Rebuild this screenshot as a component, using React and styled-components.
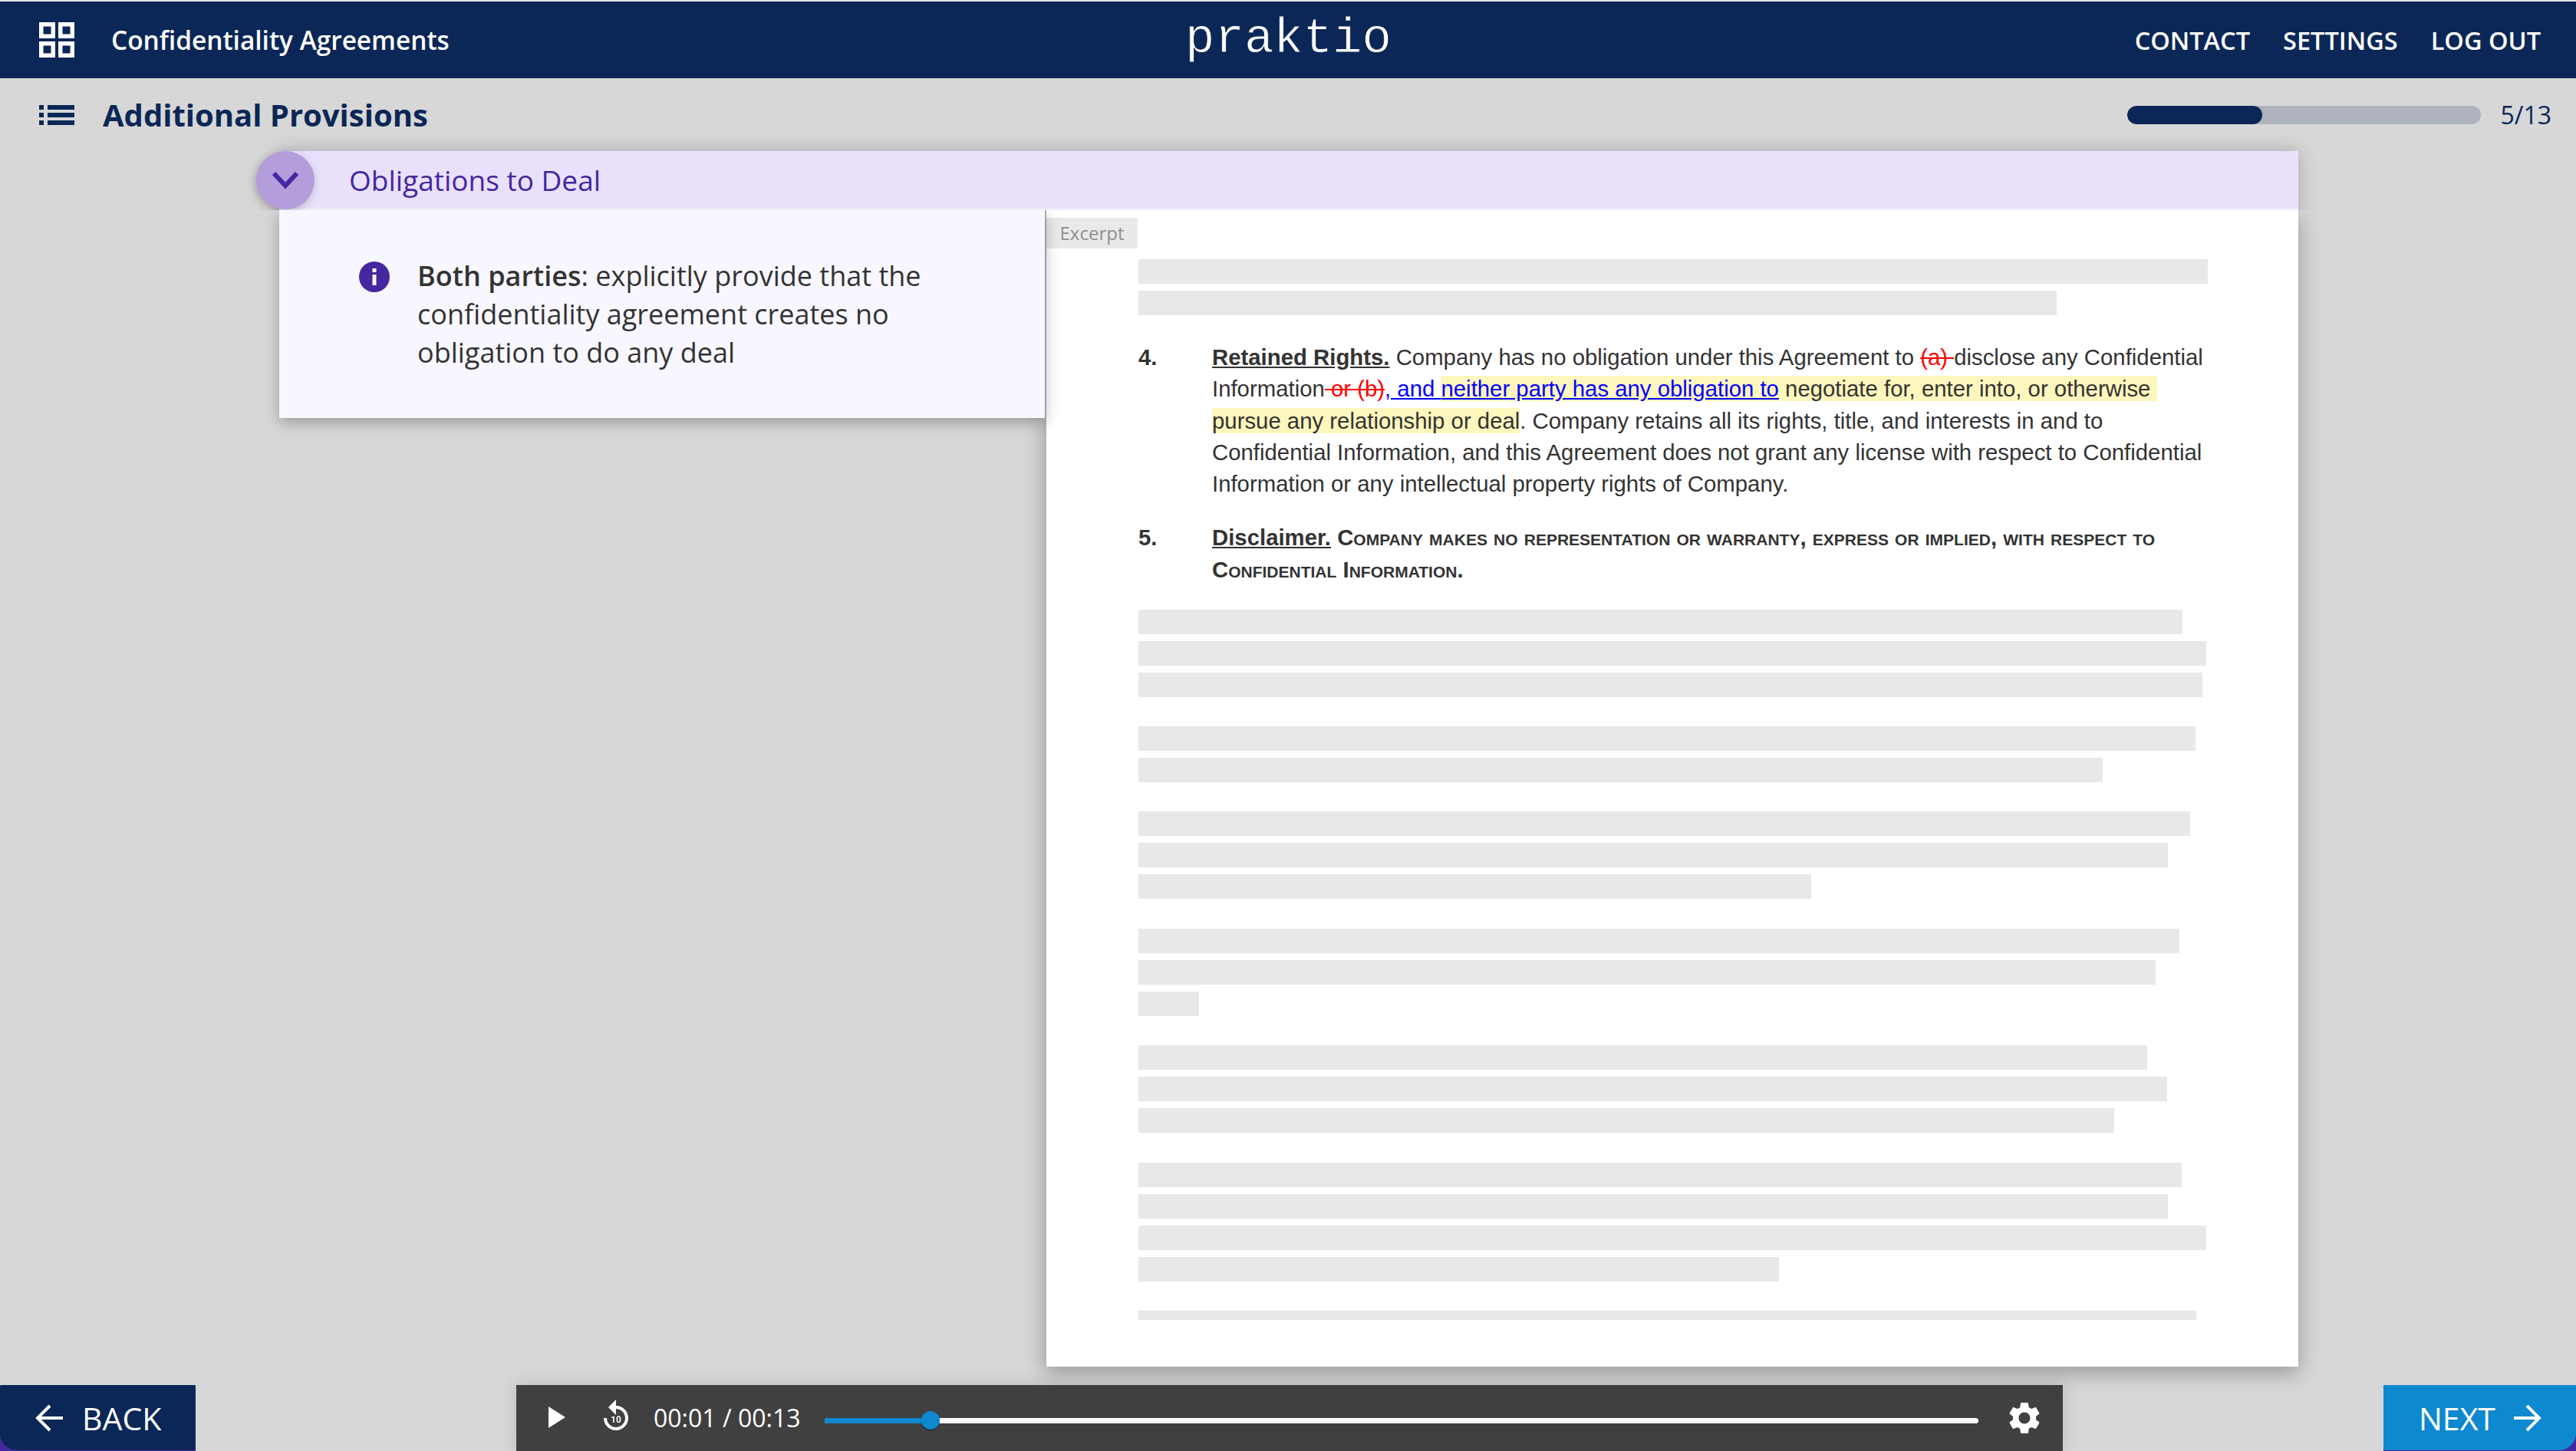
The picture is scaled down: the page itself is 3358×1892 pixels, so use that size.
import React from 'react';
import styled, { createGlobalStyle } from 'styled-components';
import { MdSettings, MdReplay10 } from 'react-icons/md';

const navy = '#0b2757';
const purple = '#4527a0';
const blue = '#0e88cf';
const sans = '"Open Sans", "Noto Sans", sans-serif';

const GlobalStyle = createGlobalStyle`
  html, body {
    margin: 0;
    padding: 0;
    background: #d7d7d7;
  }
  * { box-sizing: border-box; }
`;

const Page = styled.div`
  width: 3358px;
  height: 1892px;
  display: flex;
  flex-direction: column;
  overflow: hidden;
  background: #d7d7d7;
  border-top: 2px solid #e6e6e6;
  font-family: ${sans};
`;

const TopBar = styled.header`
  height: 100px;
  flex: none;
  display: grid;
  grid-template-columns: 1fr auto 1fr;
  align-items: center;
  padding: 0 46px 0 51px;
  background: ${navy};
  color: #fff;
`;

const CourseLink = styled.div`
  display: flex;
  align-items: center;
  gap: 48px;
  font-size: 33.4px;
  font-weight: 600;
`;

const Logo = styled.div`
  font-family: "Liberation Mono", monospace;
  font-size: 64px;
  line-height: 1;
  margin: -2px 0 0 -4px;
  -webkit-text-stroke: 0.8px ${navy};
`;

const Nav = styled.nav`
  display: flex;
  justify-content: flex-end;
  gap: 43px;
  font-size: 32.5px;
  font-weight: 600;
`;

const SubBar = styled.div`
  height: 95px;
  flex: none;
  display: flex;
  align-items: center;
  padding: 0 32px 0 51px;
  color: ${navy};
`;

const SectionTitle = styled.h1`
  flex: 1;
  margin: 0 0 0 37px;
  font-size: 40px;
  font-weight: 700;
`;

const Progress = styled.div`
  width: 461px;
  height: 24px;
  border-radius: 12px;
  overflow: hidden;
  background: #aeb2bd;
`;

const ProgressFill = styled.div`
  height: 100%;
  border-radius: 12px;
  background: ${navy};
`;

const ProgressLabel = styled.span`
  margin-left: 25px;
  font-size: 32px;
`;

const Main = styled.main`
  flex: 1;
  min-height: 0;
  display: flex;
  flex-direction: column;
  padding: 0 362px 24px 364px;
`;

const Band = styled.div`
  position: relative;
  z-index: 2;
  height: 77px;
  flex: none;
  display: flex;
  align-items: center;
  padding: 0 0 0 91px;
  background: #e9e1fc;
  border-bottom: 2px solid #f2effa;
  box-shadow: 0 0 24px rgba(0, 0, 0, 0.22);
  clip-path: inset(-40px -40px 0 -40px);
  color: ${purple};
  font-size: 37px;
  font-weight: 500;
`;

const Toggle = styled.div`
  position: absolute;
  left: -30px;
  top: 0;
  width: 76px;
  height: 76px;
  display: flex;
  align-items: center;
  justify-content: center;
  border-radius: 50%;
  background: #b39ddb;
  box-shadow: -2px 3px 12px rgba(0, 0, 0, 0.25);
`;

const Body = styled.div`
  flex: 1;
  min-height: 0;
  display: flex;
  align-items: stretch;
`;

const NotePanel = styled.section`
  position: relative;
  z-index: 1;
  width: 998px;
  height: 271px;
  flex: none;
  display: flex;
  gap: 36px;
  padding: 61px 0 0 104px;
  background: #f8f7ff;
  box-shadow: 0 6px 18px rgba(0, 0, 0, 0.28);
  color: #333;
  font-size: 36px;
  line-height: 50px;
`;

const NoteIcon = styled.svg`
  flex: none;
  margin-top: 6px;
`;

const NoteLead = styled.strong`
  font-weight: 600;
`;

const Doc = styled.article`
  position: relative;
  flex: 1;
  padding: 64px 0 0 120px;
  background: #fff;
  border-left: 2px solid #b5b5b5;
  box-shadow: 0 8px 26px rgba(0, 0, 0, 0.3);
  color: #333;
  font-family: "Liberation Sans", Arial, sans-serif;
  font-size: 29.35px;
  line-height: 41.3px;
`;

const ExcerptTag = styled.div`
  position: absolute;
  left: 0;
  top: 10px;
  width: 119px;
  height: 40px;
  display: flex;
  align-items: center;
  justify-content: center;
  background: #e9e9e9;
  color: #8f8f8f;
  font-family: ${sans};
  font-size: 24px;
`;

const BarGroup = styled.div`
  display: flex;
  flex-direction: column;
  gap: 9px;
  margin-top: ${({ $top }) => $top || 0}px;
`;

const Bar = styled.div`
  width: ${({ $w }) => $w}px;
  height: ${({ $h }) => $h || 32}px;
  background: #e8e8e8;
`;

const Clause = styled.div`
  display: grid;
  grid-template-columns: 96px 1fr;
  margin-top: ${({ $top }) => $top}px;
  white-space: pre;
`;

const ClauseNumber = styled.b`
  font-weight: 700;
`;

const ClauseTitle = styled.b`
  font-weight: 700;
  text-decoration: underline;
`;

const Deleted = styled.span`
  color: #f00;
  text-decoration: line-through;
`;

const Inserted = styled.span`
  color: #00f;
  text-decoration: underline;
`;

const Mark = styled.span`
  background: #fdf6bd;
`;

const SmallCaps = styled.span`
  font-variant: small-caps;
  font-weight: 700;
`;

const Footer = styled.footer`
  height: 86px;
  flex: none;
  display: flex;
  justify-content: space-between;
`;

const NavCorner = styled.div`
  padding-bottom: 1px;
  background: ${purple};
  border-radius: 2px 2px 0 0;
`;

const NavButton = styled.button`
  height: 100%;
  width: ${({ $w }) => $w}px;
  display: flex;
  align-items: center;
  gap: ${({ $next }) => ($next ? 24 : 25)}px;
  padding: 0 0 0 46px;
  border: 0;
  border-radius: ${({ $next }) => ($next ? '2px 2px 22px 2px' : '2px 2px 2px 22px')};
  background: ${({ $next }) => ($next ? blue : navy)};
  color: #fff;
  font-family: ${sans};
  font-size: 41px;
`;

const ArrowIcon = styled.svg`
  transform: ${({ $flip }) => ($flip ? 'scaleX(-1)' : 'none')};
`;

const Player = styled.div`
  width: 2016px;
  display: flex;
  align-items: center;
  padding: 0 30px 0 42px;
  background: #404040;
  box-shadow: 0 0 20px rgba(0, 0, 0, 0.14);
  color: #fff;
`;

const PlayIcon = styled.svg`
  flex: none;
  margin-right: 42px;
  margin-top: -2px;
`;

const ReplayButton = styled.div`
  flex: none;
  display: flex;
  margin-right: 25px;
  margin-top: -4px;
`;

const Time = styled.span`
  flex: none;
  margin: -2px 31px 0 0;
  font-size: 32px;
  font-weight: 400;
`;

const Slider = styled.div`
  position: relative;
  flex: 1;
  height: 7px;
  margin: 6px 35px 0 0;
  border-radius: 4px;
  background: #fff;
`;

const SliderFill = styled.div`
  height: 100%;
  border-radius: 4px;
  background: ${blue};
`;

const SliderThumb = styled.div`
  position: absolute;
  top: -9px;
  width: 24px;
  height: 24px;
  margin-left: -12px;
  border-radius: 50%;
  background: ${blue};
  box-shadow: 0 1px 1px rgba(0, 0, 0, 0.6);
`;

const GearButton = styled.div`
  flex: none;
  display: flex;
  margin: 0 -5px 0 0;
`;

const GridIcon = () => (
  <svg width="46" height="46" viewBox="0 0 46 46" fill="none" stroke="#fff" strokeWidth="5.5">
    <rect x="2.75" y="2.75" width="15.5" height="15.5" />
    <rect x="27.75" y="2.75" width="15.5" height="15.5" />
    <rect x="2.75" y="27.75" width="15.5" height="15.5" />
    <rect x="27.75" y="27.75" width="15.5" height="15.5" />
  </svg>
);

const ListIcon = () => (
  <svg width="46" height="26" viewBox="0 0 46 26" fill={navy}>
    <rect x="0" y="0" width="6" height="6" />
    <rect x="11" y="0" width="35" height="6" />
    <rect x="0" y="10" width="6" height="6" />
    <rect x="11" y="10" width="35" height="6" />
    <rect x="0" y="20" width="6" height="6" />
    <rect x="11" y="20" width="35" height="6" />
  </svg>
);

const Chevron = () => (
  <svg width="36" height="24" viewBox="0 0 36 24" fill="none" stroke={purple} strokeWidth="6">
    <path d="M3 3 L18 19 L33 3" />
  </svg>
);

const Arrow = ({ flip }) => (
  <ArrowIcon $flip={flip} width="36" height="36" viewBox="0 0 36 36" fill="none" stroke="#fff" strokeWidth="4">
    <path d="M36 18 H4 M19 2 L3 18 L19 34" />
  </ArrowIcon>
);

const topBars = [1394, 1197];
const barGroups = [
  { top: 32, widths: [1361, 1392, 1387] },
  { top: 38, widths: [1378, 1257] },
  { top: 38, widths: [1371, 1342, 877] },
  { top: 39, widths: [1357, 1326, 79] },
  { top: 38, widths: [1315, 1341, 1272] },
  { top: 39, widths: [1360, 1342, 1392, 835] },
];

const App = () => {
  const sliderPct = 9.2;

  return (
    <>
      <GlobalStyle />
      <Page>
        <TopBar>
          <CourseLink>
            <GridIcon />
            <span>Confidentiality Agreements</span>
          </CourseLink>
          <Logo>praktio</Logo>
          <Nav>
            <span>CONTACT</span>
            <span>SETTINGS</span>
            <span>LOG OUT</span>
          </Nav>
        </TopBar>

        <SubBar>
          <ListIcon />
          <SectionTitle>Additional Provisions</SectionTitle>
          <Progress>
            <ProgressFill style={{ width: `${(5 / 13) * 100 - 0.4}%` }} />
          </Progress>
          <ProgressLabel>5/13</ProgressLabel>
        </SubBar>

        <Main>
          <Band>
            <Toggle>
              <Chevron />
            </Toggle>
            Obligations to Deal
          </Band>
          <Body>
            <NotePanel>
              <NoteIcon width="40" height="40" viewBox="0 0 40 40">
                <circle cx="20" cy="20" r="20" fill={purple} />
                <rect x="17.5" y="9" width="5" height="5" fill="#fff" />
                <rect x="17.5" y="17" width="5" height="14" fill="#fff" />
              </NoteIcon>
              <div>
                <NoteLead>Both parties</NoteLead>: explicitly provide that the
                <br />
                confidentiality agreement creates no
                <br />
                obligation to do any deal
              </div>
            </NotePanel>

            <Doc>
              <ExcerptTag>Excerpt</ExcerptTag>
              <BarGroup>
                {topBars.map((w, i) => (
                  <Bar key={i} $w={w} />
                ))}
              </BarGroup>

              <Clause $top={34}>
                <ClauseNumber>4.</ClauseNumber>
                <div>
                  <ClauseTitle>Retained Rights.</ClauseTitle> Company has no obligation under this Agreement to{' '}
                  <Deleted>(a) </Deleted>disclose any Confidential
                  <br />
                  Information<Deleted> or (b)</Deleted>
                  <Inserted>, and </Inserted>
                  <Mark>
                    <Inserted>neither party has any obligation to</Inserted> negotiate for, enter into, or otherwise{' '}
                  </Mark>
                  <br />
                  <Mark>pursue any relationship or deal</Mark>. Company retains all its rights, title, and interests in and to
                  <br />
                  Confidential Information, and this Agreement does not grant any license with respect to Confidential
                  <br />
                  Information or any intellectual property rights of Company.
                </div>
              </Clause>

              <Clause $top={29}>
                <ClauseNumber>5.</ClauseNumber>
                <div>
                  <ClauseTitle>Disclaimer.</ClauseTitle>{' '}
                  <SmallCaps>Company makes no representation or warranty, express or implied, with respect to</SmallCaps>
                  <br />
                  <SmallCaps>Confidential Information.</SmallCaps>
                </div>
              </Clause>

              {barGroups.map((group, i) => (
                <BarGroup key={i} $top={group.top}>
                  {group.widths.map((w, j) => (
                    <Bar key={j} $w={w} />
                  ))}
                </BarGroup>
              ))}
              <BarGroup $top={38}>
                <Bar $w={1379} $h={12} />
              </BarGroup>
            </Doc>
          </Body>
        </Main>

        <Footer>
          <NavCorner>
            <NavButton $w={255}>
              <Arrow />
              BACK
            </NavButton>
          </NavCorner>

          <Player>
            <PlayIcon width="22" height="28" viewBox="0 0 22 28">
              <path d="M0 0 L22 14 L0 28 Z" fill="#fff" />
            </PlayIcon>
            <ReplayButton>
              <MdReplay10 size={48} color="#fff" />
            </ReplayButton>
            <Time>00:01 / 00:13</Time>
            <Slider>
              <SliderFill style={{ width: `${sliderPct}%` }} />
              <SliderThumb style={{ left: `${sliderPct}%` }} />
            </Slider>
            <GearButton>
              <MdSettings size={50} color="#fff" />
            </GearButton>
          </Player>

          <NavCorner>
            <NavButton $w={251} $next>
              NEXT
              <Arrow flip />
            </NavButton>
          </NavCorner>
        </Footer>
      </Page>
    </>
  );
};

export default App;
